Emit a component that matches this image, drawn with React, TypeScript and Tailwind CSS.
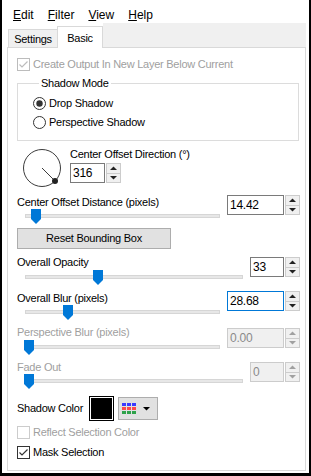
import React from "react";

function Check({ disabled }: { disabled?: boolean }) {
  const c = disabled ? "#bcbcbc" : "#333333";
  return (
    <svg width="13" height="13" viewBox="0 0 13 13" className="shrink-0">
      <rect x="0.5" y="0.5" width="12" height="12" fill="#fff" stroke={c} />
      <polyline points="2.5,6.5 5,9 10.5,3.5" fill="none" stroke={c} strokeWidth="1.2" />
    </svg>
  );
}

function Box({ disabled }: { disabled?: boolean }) {
  return (
    <svg width="13" height="13" viewBox="0 0 13 13" className="shrink-0">
      <rect x="0.5" y="0.5" width="12" height="12" fill="#fff" stroke={disabled ? "#cccccc" : "#333333"} />
    </svg>
  );
}

function Radio({ on }: { on?: boolean }) {
  return (
    <svg width="13" height="13" viewBox="0 0 13 13" className="shrink-0">
      <circle cx="6.5" cy="6.5" r="6" fill="#fff" stroke="#333333" />
      {on && <circle cx="6.5" cy="6.5" r="3.2" fill="#333333" />}
    </svg>
  );
}

function Arrow({ up, color }: { up?: boolean; color: string }) {
  return (
    <svg width="7" height="4" viewBox="0 0 7 4" className="block">
      <polygon points={up ? "0,4 3.5,0.5 7,4" : "0,0 3.5,3.5 7,0"} fill={color} />
    </svg>
  );
}

function Spinner({
  value,
  inputW,
  focused,
  disabled,
}: {
  value: string;
  inputW: string;
  focused?: boolean;
  disabled?: boolean;
}) {
  const box = focused
    ? "border-[#0078d7] bg-white text-black"
    : disabled
      ? "border-[#cccccc] bg-[#f0f0f0] text-[#8a8a8a]"
      : "border-[#7a7a7a] bg-white text-black";
  const ac = disabled ? "#a0a0a0" : "#222222";
  return (
    <div className="flex h-[20px] shrink-0">
      <div className={`flex items-center border pl-[2px] text-[12px] ${inputW} ${box}`}>{value}</div>
      <div className="ml-[1px] flex w-[15px] flex-col border border-[#cccccc] bg-[#f0f0f0]">
        <div className="flex flex-1 items-center justify-center">
          <Arrow up color={ac} />
        </div>
        <div className="flex flex-1 items-center justify-center border-t border-[#cccccc]">
          <Arrow color={ac} />
        </div>
      </div>
    </div>
  );
}

function Thumb() {
  return (
    <svg width="10" height="15" viewBox="0 0 10 15" className="block">
      <polygon points="0,0 10,0 10,10 5,15 0,10" fill="#0078d7" />
    </svg>
  );
}

function Slider({ trackW, pos }: { trackW: string; pos: number }) {
  return (
    <div className={`relative ml-[8px] h-[16px] pt-[5px] ${trackW}`}>
      <div className="h-[4px] w-full border border-[#d6d6d6] bg-[#e7e7e7]" />
      <div className="absolute top-0" style={{ left: pos }}>
        <Thumb />
      </div>
    </div>
  );
}

function Param({
  label,
  value,
  inputW,
  trackW,
  pos,
  mt,
  spinMt,
  sliderMt,
  focused,
  disabled,
}: {
  label: string;
  value: string;
  inputW: string;
  trackW: string;
  pos: number;
  mt: string;
  spinMt: string;
  sliderMt: string;
  focused?: boolean;
  disabled?: boolean;
}) {
  return (
    <div className={`flex items-start justify-between ${mt}`}>
      <div className="flex flex-col">
        <div className={`h-[14px] leading-[14px] ${disabled ? "text-[#a0a0a0]" : "text-black"}`}>{label}</div>
        <div className={sliderMt}>
          <Slider trackW={trackW} pos={pos} />
        </div>
      </div>
      <div className={spinMt}>
        <Spinner value={value} inputW={inputW} focused={focused} disabled={disabled} />
      </div>
    </div>
  );
}

function Palette() {
  const rows = ["#3b3bff", "#ff4a4a", "#2ea24a"];
  return (
    <div className="grid grid-cols-3 gap-[1px]">
      {rows.map((c) =>
        [0, 1, 2].map((i) => <div key={c + i} className="h-[3px] w-[4px]" style={{ background: c }} />)
      )}
    </div>
  );
}

export default function App() {
  return (
    <div className="flex h-[476px] w-[311px] flex-col border-x-2 border-b-[3px] border-black bg-white font-['Liberation_Sans',Arial,sans-serif] text-black">
      {/* menu */}
      <div className="flex h-[23px] gap-[14px] pl-[11px] pt-[8px] text-[12px] leading-[14px]">
        <span><u className="underline-offset-1">E</u>dit</span>
        <span><u className="underline-offset-1">F</u>ilter</span>
        <span><u className="underline-offset-1">V</u>iew</span>
        <span><u className="underline-offset-1">H</u>elp</span>
      </div>

      {/* tabs */}
      <div className="flex h-[24px] items-end pl-[6px] text-[11px] tracking-[-0.25px]">
        <div className="flex h-[18px] w-[49px] items-center justify-center border-l border-t border-[#d9d9d9] bg-[#f0f0f0] pt-px">
          Settings
        </div>
        <div className="relative z-10 -mb-px flex h-[22px] w-[46px] items-start justify-center border-x border-t border-[#d9d9d9] bg-white pt-[3px]">
          Basic
        </div>
        <div className="h-[24px] w-[203px] bg-[#f0f0f0]" />
      </div>

      {/* panel */}
      <div className="ml-[5px] flex h-[424px] w-[299px] flex-col border border-[#d9d9d9] pl-[9px] pr-[5px] text-[11px] tracking-[-0.25px]">
        <div className="mt-[10px] flex h-[13px] items-center gap-[3px] text-[#a0a0a0]">
          <Check disabled />
          <span>Create Output In New Layer Below Current</span>
        </div>

        <fieldset className="mt-[5px] w-[282px] border border-[#dcdcdc] pb-[11px] pl-[15px]">
          <legend className="ml-[6px] px-[2px] leading-[14px]">Shadow Mode</legend>
          <div className="mt-[7px] flex h-[13px] items-center gap-[3px]">
            <Radio on />
            <span>Drop Shadow</span>
          </div>
          <div className="mt-[6px] flex h-[13px] items-center gap-[3px]">
            <Radio />
            <span>Perspective Shadow</span>
          </div>
        </fieldset>

        <div className="mt-[6px] flex">
          <svg width="40" height="40" viewBox="0 0 40 40" className="ml-[5px] mt-[1px] shrink-0">
            <circle cx="20" cy="20" r="18.5" fill="none" stroke="#3c3c3c" />
            <line x1="20" y1="20" x2="33" y2="33" stroke="#3c3c3c" />
            <circle cx="33" cy="33" r="3" fill="#222" />
          </svg>
          <div className="ml-[8px] flex flex-col">
            <div className="h-[14px] leading-[14px]">Center Offset Direction (°)</div>
            <div className="mt-[2px]">
              <Spinner value="316" inputW="w-[35px]" />
            </div>
          </div>
        </div>

        <Param label="Center Offset Distance (pixels)" value="14.42" inputW="w-[57px]" trackW="w-[195px]" pos={6} mt="mt-[7px]" spinMt="mt-0" sliderMt="mt-0" />

        <div className="mt-[3px] flex h-[21px] w-[154px] items-center justify-center border border-[#adadad] bg-[#e1e1e1]">
          Reset Bounding Box
        </div>

        <Param label="Overall Opacity" value="33" inputW="w-[34px]" trackW="w-[218px]" pos={68} mt="mt-[6px]" spinMt="mt-[2px]" sliderMt="mt-[1px]" />
        <Param label="Overall Blur (pixels)" value="28.68" inputW="w-[57px]" trackW="w-[195px]" pos={38} mt="mt-[5px]" spinMt="mt-0" sliderMt="mt-0" focused />
        <Param label="Perspective Blur (pixels)" value="0.00" inputW="w-[57px]" trackW="w-[195px]" pos={-1} mt="mt-[4px]" spinMt="mt-[3px]" sliderMt="mt-[1px]" disabled />
        <Param label="Fade Out" value="0" inputW="w-[34px]" trackW="w-[218px]" pos={-1} mt="mt-[4px]" spinMt="mt-[2px]" sliderMt="mt-0" disabled />

        <div className="mt-[6px] flex h-[25px] items-center">
          <span className="w-[72px]">Shadow Color</span>
          <div className="h-[25px] w-[25px] border border-black bg-white p-[1px]">
            <div className="h-full w-full bg-black" />
          </div>
          <div className="ml-[4px] flex h-[23px] w-[40px] items-center gap-[7px] border border-[#adadad] bg-[#e1e1e1] pl-[3px]">
            <Palette />
            <Arrow color="#000" />
          </div>
        </div>

        <div className="mt-[5px] flex h-[13px] items-center gap-[3px] text-[#a0a0a0]">
          <Box disabled />
          <span>Reflect Selection Color</span>
        </div>
        <div className="mt-[7px] flex h-[13px] items-center gap-[3px]">
          <Check />
          <span>Mask Selection</span>
        </div>
      </div>
    </div>
  );
}
